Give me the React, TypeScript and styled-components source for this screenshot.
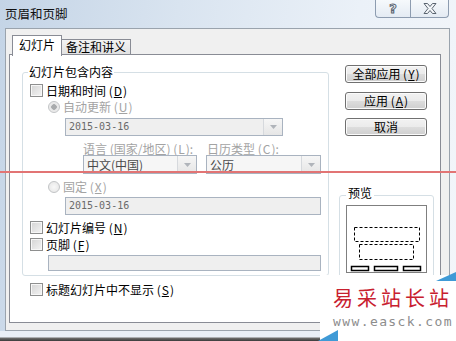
import React from 'react';
import styled, { createGlobalStyle } from 'styled-components';

const GlobalStyle = createGlobalStyle`
  html, body { margin: 0; padding: 0; }
  body {
    font-family: "Noto Sans CJK SC", "Liberation Sans", sans-serif;
    font-size: 12px;
    color: #000;
  }
`;

const Window = styled.div`
  position: relative;
  width: 456px;
  height: 341px;
  overflow: hidden;
  display: flex;
  flex-direction: column;
  background: linear-gradient(100deg, #c4d4e6 0%, #d9e4f0 35%, #ebf1f8 70%, #f3f6fa 100%);
`;

const TitleBar = styled.div`
  height: 28px;
  display: flex;
  align-items: flex-start;
  flex-shrink: 0;
`;

const Title = styled.div`
  padding: 5px 0 0 5px;
  font-size: 12.5px;
  line-height: 17px;
  color: #111;
`;

const Captions = styled.div`
  margin-left: auto;
  margin-right: 7px;
  display: flex;
`;

const CaptionBtn = styled.div<{ $w: number; $first?: boolean }>`
  width: ${p => p.$w}px;
  height: 18px;
  box-sizing: border-box;
  border: 1px solid #8d9cb0;
  border-top: none;
  ${p => (p.$first ? 'border-right: none; border-bottom-left-radius: 4px;' : 'border-bottom-right-radius: 4px;')}
  background: linear-gradient(#f6f9fc, #e4ebf3);
  display: flex;
  align-items: center;
  justify-content: center;
`;

const HelpGlyph = styled.span`
  font-family: "DejaVu Sans", sans-serif;
  font-size: 13px;
  font-weight: bold;
  color: #f4f7fa;
  -webkit-text-stroke: 1px #5a6470;
  line-height: 14px;
`;

const Body = styled.div`
  margin-left: 5px;
  width: 445px;
  height: 303px;
  box-sizing: border-box;
  border: 1px solid #9aa3ad;
  background: #f0f0f0;
  padding: 6px 0 0 3px;
  flex-shrink: 0;
`;

const TabStrip = styled.div`
  display: flex;
  align-items: flex-end;
  height: 20px;
  padding-left: 3px;
  position: relative;
  z-index: 1;
`;

const Tab = styled.div<{ $active?: boolean; $w: number }>`
  width: ${p => p.$w}px;
  box-sizing: border-box;
  border: 1px solid #898c95;
  ${p =>
    p.$active
      ? 'height: 21px; margin-bottom: -1px; border-bottom: none; background: #fff; padding-top: 2px;'
      : 'height: 16px; border-left: none; background: linear-gradient(#f3f3f3, #e2e2e2); padding-top: 0px;'}
  text-align: center;
  font-size: 12px;
  line-height: 14px;
`;

const Panel = styled.div`
  width: 432px;
  height: 269px;
  margin-top: -1px;
  box-sizing: border-box;
  border: 1px solid #898c95;
  background: #fff;
  display: flex;
  padding-left: 12px;
`;

const LeftCol = styled.div`
  padding-top: 17px;
  display: flex;
  flex-direction: column;
`;

const Group = styled.div`
  position: relative;
  width: 307px;
  height: 204px;
  box-sizing: border-box;
  border: 1px solid #d5dfe5;
  border-radius: 3px;
  padding-left: 7px;
`;

const Legend = styled.span`
  position: absolute;
  top: -9px;
  left: 5px;
  padding: 0 1px;
  background: #fff;
  line-height: 15px;
  font-size: 12px;
`;

const Row = styled.div<{ $top: number; $indent?: number; $h?: number }>`
  display: flex;
  align-items: center;
  margin-top: ${p => p.$top}px;
  margin-left: ${p => p.$indent ?? 0}px;
  height: ${p => p.$h ?? 13}px;
`;

const Check = styled.span`
  width: 13px;
  height: 13px;
  box-sizing: border-box;
  border: 1px solid #8e8f8f;
  background: linear-gradient(135deg, #d4d4d4, #f4f4f4);
  box-shadow: inset 0 0 0 1px #f7f7f7;
  margin-right: 3px;
  flex-shrink: 0;
`;

const Radio = styled.span<{ $on?: boolean }>`
  width: 12px;
  height: 12px;
  box-sizing: border-box;
  border-radius: 50%;
  border: 1px solid #c2c4c6;
  background: ${p =>
    p.$on ? 'radial-gradient(circle, #a9abad 0 2.5px, #e6e6e6 3px, #f4f4f4 100%)' : 'radial-gradient(circle, #f8f8f8, #e4e4e4)'};
  margin-right: 3px;
  flex-shrink: 0;
`;

const Label = styled.span<{ $dim?: boolean; $w?: number }>`
  font-size: 12px;
  line-height: 14px;
  white-space: nowrap;
  color: ${p => (p.$dim ? '#a3a3a3' : '#000')};
  ${p => (p.$w ? `width: ${p.$w}px;` : '')}
`;

const Field = styled.div<{ $w: number; $h: number; $light?: boolean }>`
  width: ${p => p.$w}px;
  height: ${p => p.$h}px;
  box-sizing: border-box;
  border: 1px solid #a9b3c0;
  background: ${p => (p.$light ? '#f6f6f6' : '#efefef')};
  display: flex;
  align-items: center;
  flex-shrink: 0;
`;

const FieldText = styled.span<{ $mono?: boolean }>`
  flex: 1;
  padding-left: 3px;
  color: ${p => (p.$mono ? '#6a6a6a' : '#4a4a4a')};
  font-family: ${p => (p.$mono ? '"DejaVu Sans Mono", monospace' : '"Noto Sans CJK SC", sans-serif')};
  font-size: ${p => (p.$mono ? '10px' : '12px')};
  line-height: 14px;
`;

const DropBtn = styled.span`
  width: 19px;
  align-self: stretch;
  box-sizing: border-box;
  border-left: 1px solid #d6d9dd;
  background: linear-gradient(#f6f6f6, #e6e6e6);
  display: flex;
  align-items: center;
  justify-content: center;
`;

const Gap = styled.span<{ $w: number }>`
  width: ${p => p.$w}px;
  flex-shrink: 0;
`;

const U = styled.span`
  text-decoration: underline;
  text-underline-offset: 1px;
  padding: 0 1px;
`;

const RightCol = styled.div`
  margin-left: 10px;
  padding-top: 10px;
  display: flex;
  flex-direction: column;
`;

const Button = styled.div<{ $top: number }>`
  margin-left: 6px;
  margin-top: ${p => p.$top}px;
  width: 82px;
  height: 18px;
  box-sizing: border-box;
  border: 1px solid #707070;
  border-radius: 3px;
  background: linear-gradient(#f2f2f2 0%, #ebebeb 50%, #dddddd 51%, #cfcfcf 100%);
  box-shadow: inset 0 0 0 1px #fbfbfb;
  display: flex;
  align-items: center;
  justify-content: center;
  font-size: 12px;
  line-height: 14px;
`;

const PreviewGroup = styled.div`
  position: relative;
  margin-top: 59px;
  width: 95px;
  height: 90px;
  box-sizing: border-box;
  border: 1px solid #d5dfe5;
  border-radius: 3px;
  padding: 9px 0 0 6px;
`;

const PreviewLegend = styled.span`
  position: absolute;
  top: -11px;
  left: 6px;
  padding: 0 2px;
  background: #fff;
  font-size: 12px;
  line-height: 15px;
`;

const Thumb = styled.div`
  width: 81px;
  height: 68px;
  box-sizing: border-box;
  border: 1px solid #7f7f7f;
  background: #fff;
  display: flex;
`;

const BottomFrame = styled.div`
  flex: 1;
  background: linear-gradient(#e8eef6 0px, #e8eef6 6px, #6e6e6e 7px, #3a3a3a 100%);
`;

const RedLine = styled.div`
  position: absolute;
  left: 0;
  right: 0;
  top: 171px;
  height: 2px;
  background: #e27474;
`;

const Watermark = styled.div`
  position: absolute;
  left: 320px;
  top: 275px;
  right: 0;
  bottom: 0;
  background: #fff;
  display: flex;
  flex-direction: column;
  padding: 11px 0 0 13px;
`;

const WmTitle = styled.div`
  color: #c8202f;
  font-family: "Noto Sans CJK SC", sans-serif;
  font-size: 20px;
  line-height: 24px;
  letter-spacing: 4px;
  white-space: nowrap;
`;

const WmUrl = styled.div`
  margin-top: 5px;
  color: #8d8d8d;
  font-family: "DejaVu Sans Mono", monospace;
  font-size: 13px;
  line-height: 14px;
  letter-spacing: 1.4px;
  white-space: nowrap;
`;

const Corner = styled.svg<{ $pos: 'tr' | 'bl' }>`
  position: absolute;
  ${p => (p.$pos === 'tr' ? 'right: 0; top: -3px;' : 'left: -2px; bottom: 0;')}
`;

const Arrow = () => (
  <svg width="7" height="4" viewBox="0 0 7 4">
    <path d="M0 0 H7 L3.5 4 Z" fill="#b0b4ba" />
  </svg>
);

const Dropdown = ({ w, h, text, mono, light }: { w: number; h: number; text: string; mono?: boolean; light?: boolean }) => (
  <Field $w={w} $h={h} $light={light}>
    <FieldText $mono={mono}>{text}</FieldText>
    <DropBtn>
      <Arrow />
    </DropBtn>
  </Field>
);

export default function App() {
  return (
    <>
      <GlobalStyle />
      <Window>
        <TitleBar>
          <Title>页眉和页脚</Title>
          <Captions>
            <CaptionBtn $w={35} $first>
              <HelpGlyph>?</HelpGlyph>
            </CaptionBtn>
            <CaptionBtn $w={39}>
              <svg width="14" height="11" viewBox="0 0 14 11">
                <path
                  d="M1 0.5 H4.5 L7 3.5 L9.5 0.5 H13 L9 5.5 L13 10.5 H9.5 L7 7.5 L4.5 10.5 H1 L5 5.5 Z"
                  fill="#f4f7fa"
                  stroke="#5a6470"
                  strokeWidth="1"
                />
              </svg>
            </CaptionBtn>
          </Captions>
        </TitleBar>
        <Body>
          <TabStrip>
            <Tab $active $w={50}>幻灯片</Tab>
            <Tab $w={69}>备注和讲义</Tab>
          </TabStrip>
          <Panel>
            <LeftCol>
              <Group>
                <Legend>幻灯片包含内容</Legend>
                <Row $top={11}>
                  <Check />
                  <Label>日期和时间 (<U>D</U>)</Label>
                </Row>
                <Row $top={3} $indent={18}>
                  <Radio $on />
                  <Label $dim>自动更新 (<U>U</U>)</Label>
                </Row>
                <Row $top={5} $indent={35} $h={18}>
                  <Dropdown w={218} h={18} text="2015-03-16" mono />
                </Row>
                <Row $top={6} $indent={53}>
                  <Label $dim $w={124}>语言 (国家/地区) (<U>L</U>):</Label>
                  <Label $dim>日历类型 (<U>C</U>):</Label>
                </Row>
                <Row $top={0} $indent={53} $h={19}>
                  <Dropdown w={114} h={19} text="中文(中国)" light />
                  <Gap $w={9} />
                  <Dropdown w={115} h={19} text="公历" light />
                </Row>
                <Row $top={6} $indent={18}>
                  <Radio />
                  <Label $dim>固定 (<U>X</U>)</Label>
                </Row>
                <Row $top={4} $indent={35} $h={18}>
                  <Field $w={256} $h={18}>
                    <FieldText $mono>2015-03-16</FieldText>
                  </Field>
                </Row>
                <Row $top={6}>
                  <Check />
                  <Label>幻灯片编号 (<U>N</U>)</Label>
                </Row>
                <Row $top={4}>
                  <Check />
                  <Label>页脚 (<U>F</U>)</Label>
                </Row>
                <Row $top={4} $indent={18} $h={16}>
                  <Field $w={273} $h={16} />
                </Row>
              </Group>
              <Row $top={7} $indent={8}>
                <Check />
                <Label>标题幻灯片中不显示 (<U>S</U>)</Label>
              </Row>
            </LeftCol>
            <RightCol>
              <Button $top={0}>全部应用 (<U>Y</U>)</Button>
              <Button $top={9}>应用 (<U>A</U>)</Button>
              <Button $top={8}>取消</Button>
              <PreviewGroup>
                <PreviewLegend>预览</PreviewLegend>
                <Thumb>
                  <svg width="79" height="66" viewBox="0 0 79 66">
                    <rect x="7.5" y="21.5" width="65" height="14" fill="none" stroke="#000" strokeDasharray="3 2" />
                    <rect x="12.5" y="38.5" width="54" height="15" fill="none" stroke="#000" strokeDasharray="3 2" />
                    <rect x="4.5" y="60.5" width="17" height="4" fill="#fff" stroke="#000" strokeWidth="1.5" />
                    <rect x="27.5" y="60.5" width="23" height="4" fill="#fff" stroke="#000" strokeWidth="1.5" />
                    <rect x="56.5" y="60.5" width="17" height="4" fill="#fff" stroke="#000" strokeWidth="1.5" />
                  </svg>
                </Thumb>
              </PreviewGroup>
            </RightCol>
          </Panel>
        </Body>
        <BottomFrame />
        <RedLine />
        <Watermark>
          <Corner $pos="tr" width="20" height="9" viewBox="0 0 20 9">
            <path d="M0 9 L20 0 V9 Z" fill="#3f9ad6" />
          </Corner>
          <Corner $pos="bl" width="20" height="11" viewBox="0 0 20 11">
            <path d="M0 11 L20 0 V11 Z" fill="#3f9ad6" />
          </Corner>
          <WmTitle>易采站长站</WmTitle>
          <WmUrl>www.easck.com</WmUrl>
        </Watermark>
      </Window>
    </>
  );
}
